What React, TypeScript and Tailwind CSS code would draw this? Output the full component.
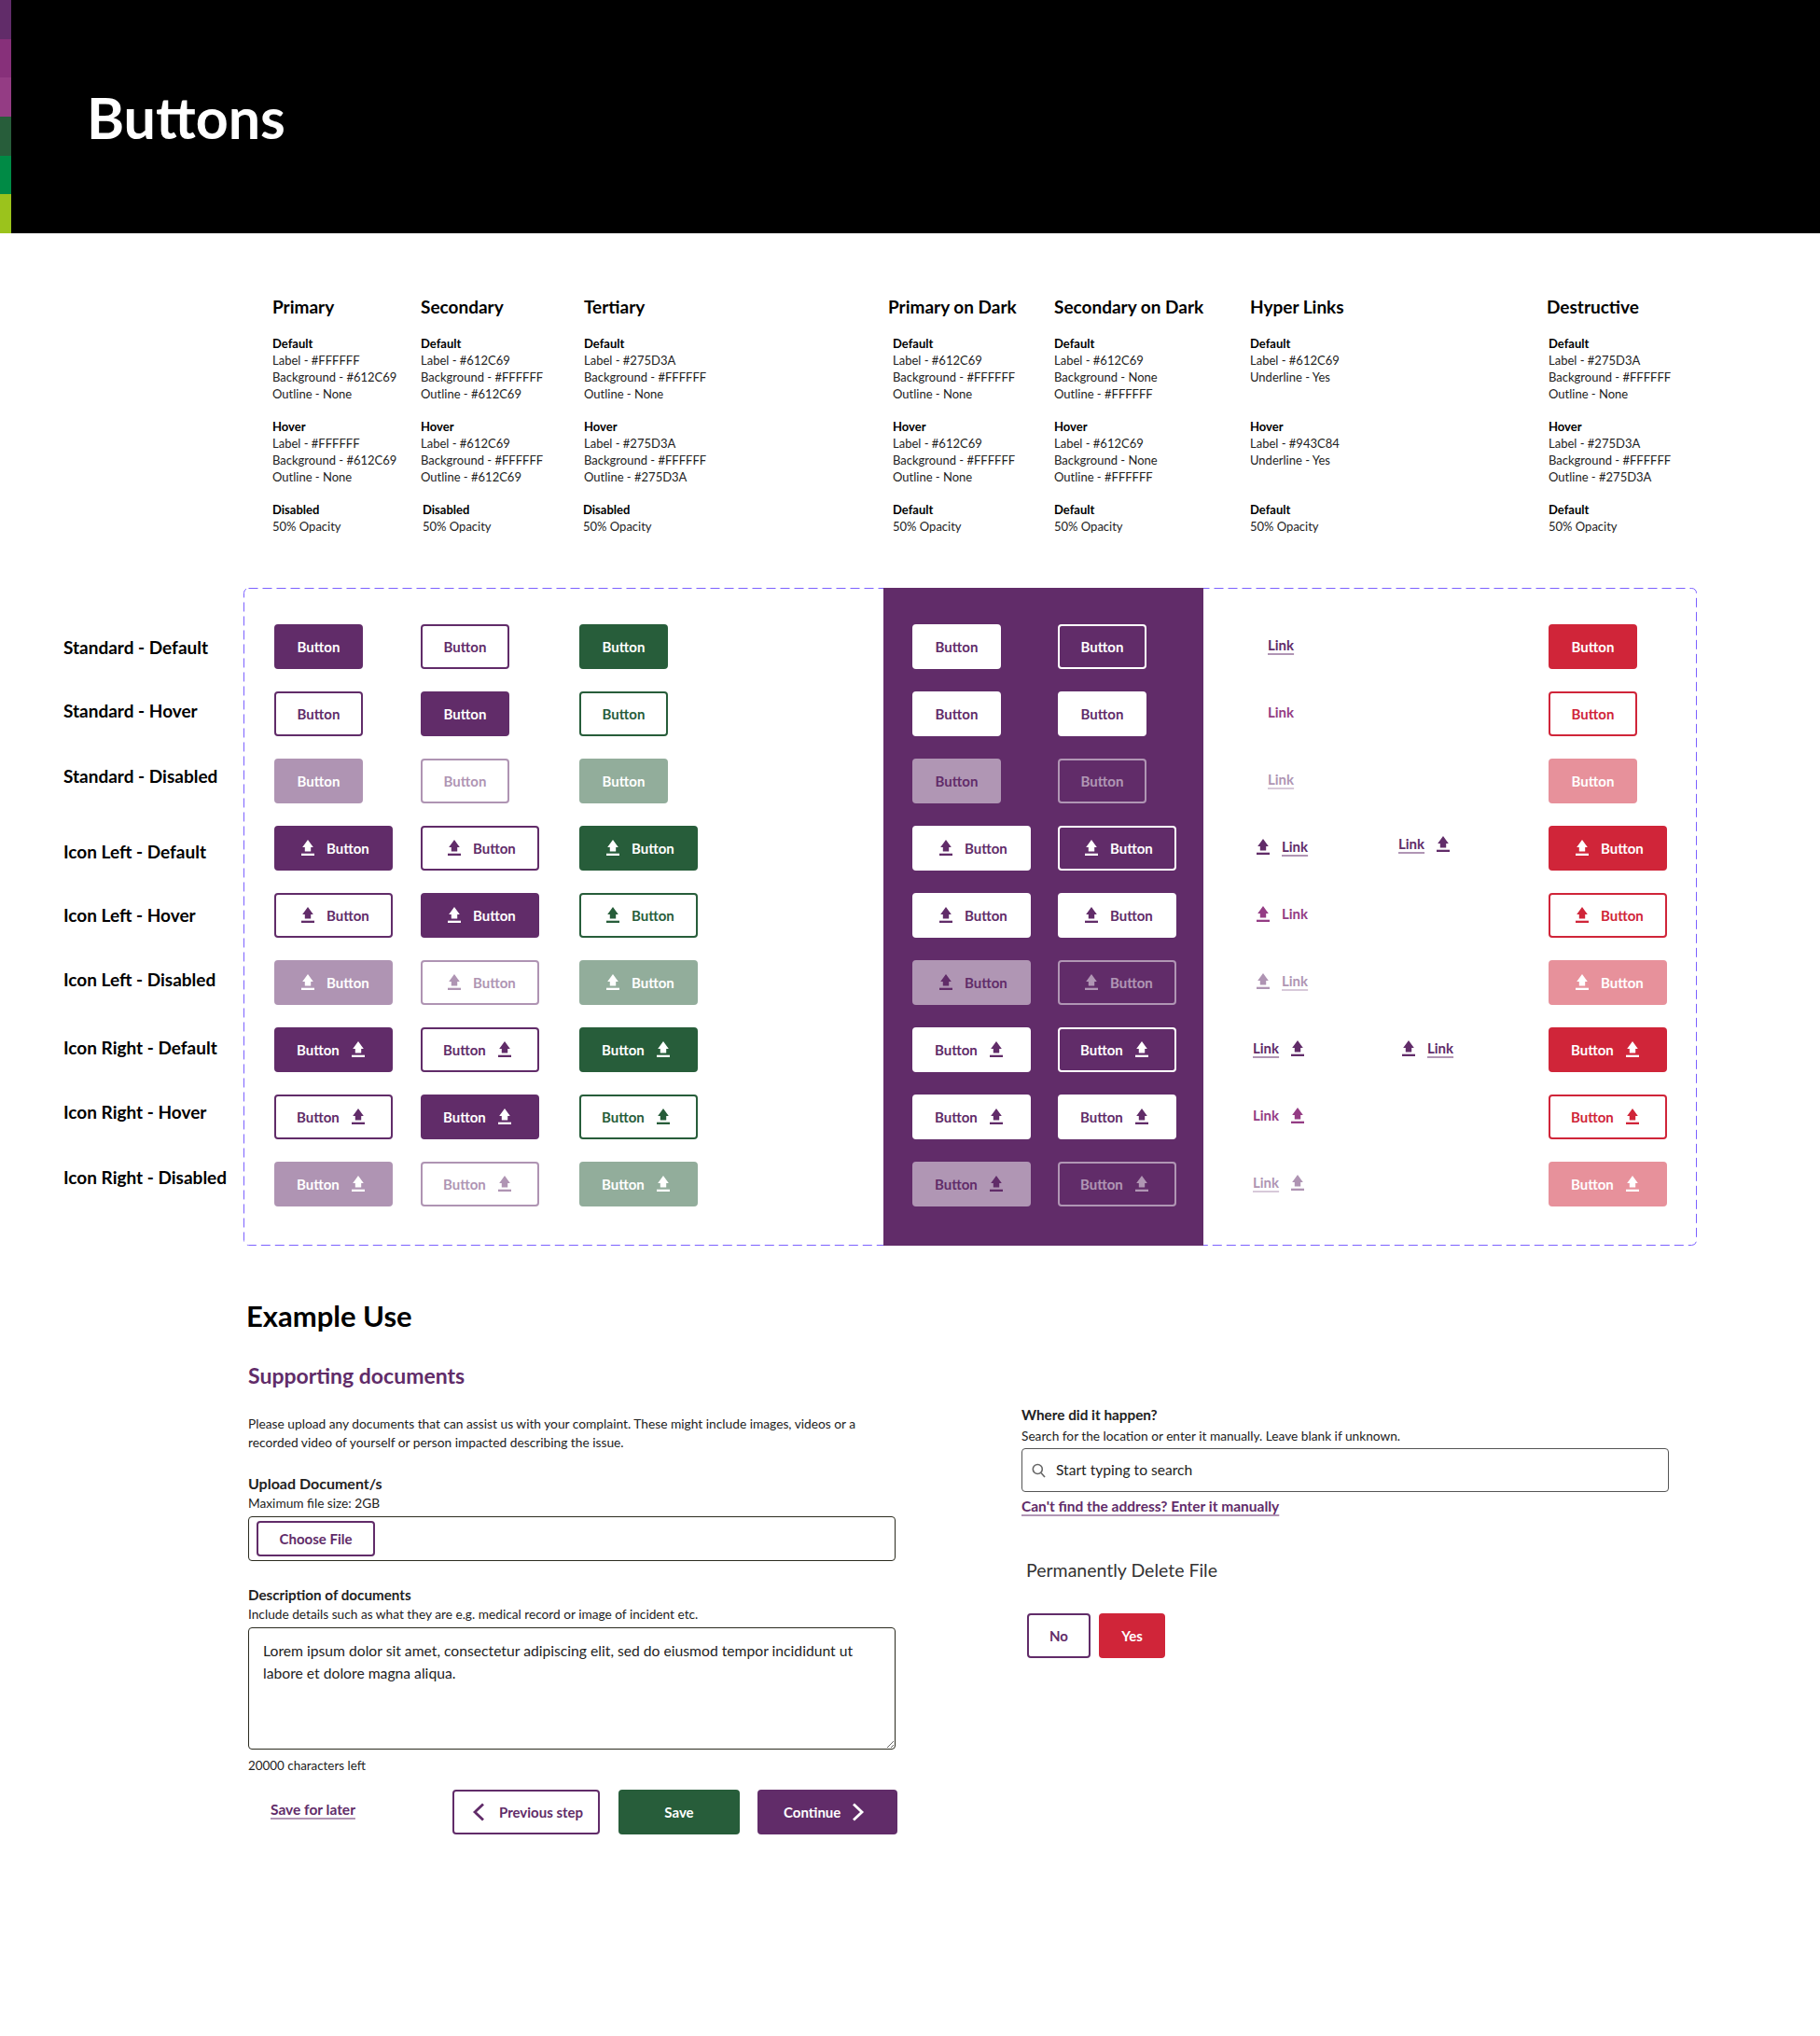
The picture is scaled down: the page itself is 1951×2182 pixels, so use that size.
import { ReactNode } from "react";

function UploadIcon({ className = "" }: { className?: string }) {
  return (
    <svg className={`w-[14px] h-[17px] shrink-0 -mt-[1px] ${className}`} viewBox="0 0 14 17" fill="currentColor">
      <path d="M7 0l5.8 8H10.2v4.6H3.8V8H1.2z" />
      <rect x="0" y="14.7" width="14" height="2.3" />
    </svg>
  );
}

type Kind = "plain" | "left" | "right";
type State = "default" | "hover" | "disabled";

const variants: Record<string, { default: string; hover: string }> = {
  primary: {
    default: "bg-[#612c69] border-[#612c69] text-white",
    hover: "bg-white border-[#612c69] text-[#612c69]",
  },
  secondary: {
    default: "bg-white border-[#612c69] text-[#612c69]",
    hover: "bg-[#612c69] border-[#612c69] text-white",
  },
  tertiary: {
    default: "bg-[#275d3a] border-[#275d3a] text-white",
    hover: "bg-white border-[#275d3a] text-[#275d3a]",
  },
  darkPrimary: {
    default: "bg-white border-white text-[#612c69]",
    hover: "bg-white border-white text-[#612c69]",
  },
  darkSecondary: {
    default: "bg-[#612c69] border-white text-white",
    hover: "bg-white border-white text-[#612c69]",
  },
  destructive: {
    default: "bg-[#d02539] border-[#d02539] text-white",
    hover: "bg-white border-[#d02539] text-[#d02539]",
  },
};

const rows: { kind: Kind; state: State }[] = [
  { kind: "plain", state: "default" },
  { kind: "plain", state: "hover" },
  { kind: "plain", state: "disabled" },
  { kind: "left", state: "default" },
  { kind: "left", state: "hover" },
  { kind: "left", state: "disabled" },
  { kind: "right", state: "default" },
  { kind: "right", state: "hover" },
  { kind: "right", state: "disabled" },
];

const kindLayout: Record<Kind, string> = {
  plain: "w-[95px] justify-center",
  left: "w-[127px] pl-[27px] gap-[13px]",
  right: "w-[127px] pl-[22px] gap-[13px]",
};

function Btn({ variant, kind, state }: { variant: string; kind: Kind; state: State }) {
  const v = variants[variant];
  const look = state === "hover" ? v.hover : v.default;
  const fade = state === "disabled" ? "opacity-50" : "";
  return (
    <div className={`${kindLayout[kind]} h-[48px] rounded-[4px] border-2 flex items-center text-[15px] font-bold ${look} ${fade}`}>
      {kind === "left" && <UploadIcon />}
      <span>Button</span>
      {kind === "right" && <UploadIcon />}
    </div>
  );
}

function BtnColumn({ variant, className = "" }: { variant: string; className?: string }) {
  return (
    <div className={`flex flex-col gap-6 ${className}`}>
      {rows.map((r, i) => (
        <Btn key={i} variant={variant} kind={r.kind} state={r.state} />
      ))}
    </div>
  );
}

function Lnk({ children = "Link", hover, className = "" }: { children?: ReactNode; hover?: boolean; className?: string }) {
  return (
    <span
      className={
        hover
          ? `text-[#943c84] ${className}`
          : `text-[#612c69] underline decoration-[#b095b4] decoration-2 underline-offset-[3px] ${className}`
      }
    >
      {children}
    </span>
  );
}

function LinkCell({ state, kind, className = "" }: { state: State; kind: Kind; className?: string }) {
  const hover = state === "hover";
  return (
    <div className={`h-[48px] pb-[3px] flex items-center gap-[13px] text-[15px] font-bold ${hover ? "text-[#943c84]" : "text-[#612c69]"} ${state === "disabled" ? "opacity-50" : ""} ${className}`}>
      {kind === "left" && <UploadIcon />}
      <Lnk hover={hover} />
      {kind === "right" && <UploadIcon />}
    </div>
  );
}

const labels: { text: string; cls: string }[] = [
  { text: "Standard - Default", cls: "" },
  { text: "Standard - Hover", cls: "mt-[42px]" },
  { text: "Standard - Disabled", cls: "mt-[44px]" },
  { text: "Icon Left - Default", cls: "mt-[55px]" },
  { text: "Icon Left - Hover", cls: "mt-[42px]" },
  { text: "Icon Left - Disabled", cls: "mt-[43px]" },
  { text: "Icon Right - Default", cls: "mt-[47px]" },
  { text: "Icon Right - Hover", cls: "mt-[43px]" },
  { text: "Icon Right - Disabled", cls: "mt-[44px]" },
];

type Spec = {
  title: string;
  width: string;
  body?: string;
  a: string[];
  b: string[];
  c: string;
  cIndent?: string;
};

const specs: Spec[] = [
  {
    title: "Primary",
    width: "w-[159px]",
    a: ["Label - #FFFFFF", "Background - #612C69", "Outline - None"],
    b: ["Label - #FFFFFF", "Background - #612C69", "Outline - None"],
    c: "Disabled",
  },
  {
    title: "Secondary",
    width: "w-[175px]",
    a: ["Label - #612C69", "Background - #FFFFFF", "Outline - #612C69"],
    b: ["Label - #612C69", "Background - #FFFFFF", "Outline - #612C69"],
    c: "Disabled",
    cIndent: "ml-[2px]",
  },
  {
    title: "Tertiary",
    width: "w-[326px]",
    a: ["Label - #275D3A", "Background - #FFFFFF", "Outline - None"],
    b: ["Label - #275D3A", "Background - #FFFFFF", "Outline - #275D3A"],
    c: "Disabled",
    cIndent: "-ml-[1px]",
  },
  {
    title: "Primary on Dark",
    width: "w-[178px]",
    body: "ml-[5px]",
    a: ["Label - #612C69", "Background - #FFFFFF", "Outline - None"],
    b: ["Label - #612C69", "Background - #FFFFFF", "Outline - None"],
    c: "Default",
  },
  {
    title: "Secondary on Dark",
    width: "w-[210px]",
    a: ["Label - #612C69", "Background - None", "Outline - #FFFFFF"],
    b: ["Label - #612C69", "Background - None", "Outline - #FFFFFF"],
    c: "Default",
  },
  {
    title: "Hyper Links",
    width: "w-[318px]",
    a: ["Label - #612C69", "Underline - Yes"],
    b: ["Label - #943C84", "Underline - Yes"],
    c: "Default",
  },
  {
    title: "Destructive",
    width: "w-[200px]",
    body: "ml-[2px]",
    a: ["Label - #275D3A", "Background - #FFFFFF", "Outline - None"],
    b: ["Label - #275D3A", "Background - #FFFFFF", "Outline - #275D3A"],
    c: "Default",
  },
];

function SpecColumn({ spec }: { spec: Spec }) {
  return (
    <div className={`${spec.width} shrink-0`}>
      <h3 className="text-[19px] leading-[26px] font-bold text-black">{spec.title}</h3>
      <div className={`mt-[17px] text-[13px] leading-[18px] text-[#222] ${spec.body ?? ""}`}>
        <div className="h-[89px]">
          <div className="font-bold text-black">Default</div>
          {spec.a.map((l) => (
            <div key={l}>{l}</div>
          ))}
        </div>
        <div className="h-[89px]">
          <div className="font-bold text-black">Hover</div>
          {spec.b.map((l) => (
            <div key={l}>{l}</div>
          ))}
        </div>
        <div className={spec.cIndent ?? ""}>
          <div className="font-bold text-black">{spec.c}</div>
          <div>50% Opacity</div>
        </div>
      </div>
    </div>
  );
}

function Chevron({ dir }: { dir: "left" | "right" }) {
  return (
    <svg className="w-[14px] h-[20px] shrink-0" viewBox="0 0 14 20" fill="none" stroke="currentColor" strokeWidth="2.8">
      <path d={dir === "left" ? "M12 1.5L3 10l9 8.5" : "M2 1.5L11 10l-9 8.5"} />
    </svg>
  );
}

export default function App() {
  return (
    <div className="min-h-[2182px] bg-white font-['Lato',sans-serif] text-black">
      {/* Header */}
      <header className="h-[250px] bg-black flex items-center">
        <div className="w-[12px] h-full flex flex-col shrink-0">
          <div className="flex-1 bg-[#612c69]" />
          <div className="flex-1 bg-[#87307a]" />
          <div className="flex-1 bg-[#943c84]" />
          <div className="flex-1 bg-[#275d3a]" />
          <div className="flex-1 bg-[#008a45]" />
          <div className="flex-1 bg-[#9bc31c]" />
        </div>
        <h1 className="ml-[81px] text-[61px] leading-none font-bold text-white">Buttons</h1>
      </header>

      {/* Specs */}
      <div className="pt-[66px] pl-[292px] flex">
        {specs.map((s) => (
          <SpecColumn key={s.title} spec={s} />
        ))}
      </div>

      {/* Matrix */}
      <div className="mt-[57px] flex">
        <div className="ml-[68px] w-[193px] shrink-0 pt-[51px] text-[19px] leading-[26px] font-bold">
          {labels.map((l) => (
            <div key={l.text} className={l.cls}>
              {l.text}
            </div>
          ))}
        </div>
        <div className="relative w-[1558px] flex">
          <svg className="absolute inset-0 w-[1558px] h-[705px]" viewBox="0 0 1558 705" fill="none">
            <rect x="0.5" y="0.5" width="1557" height="704" rx="5" stroke="#7b61ff" strokeDasharray="10 5" />
          </svg>
          <div className="relative flex pl-[33px] pt-[39px] pb-[42px] w-[686px] shrink-0">
            <BtnColumn variant="primary" className="w-[157px]" />
            <BtnColumn variant="secondary" className="w-[170px]" />
            <BtnColumn variant="tertiary" />
          </div>
          <div className="relative w-[343px] shrink-0 bg-[#612c69] flex pl-[31px] pt-[39px]">
            <BtnColumn variant="darkPrimary" className="w-[156px]" />
            <BtnColumn variant="darkSecondary" />
          </div>
          <div className="relative flex pl-[53px] pt-[39px] w-[370px] shrink-0">
            <div className="w-[156px] flex flex-col gap-6">
              {rows.map((r, i) => (
                <LinkCell key={i} state={r.state} kind={r.kind} className={r.kind === "plain" ? "pl-[16px]" : r.kind === "left" ? "pl-[4px]" : ""} />
              ))}
            </div>
            <div className="w-[161px] flex flex-col gap-6">
              <div className="h-[192px]" />
              <LinkCell state="default" kind="right" className="-mt-[3px]" />
              <div className="h-[123px]" />
              <LinkCell state="default" kind="left" className="pl-[4px]" />
            </div>
          </div>
          <div className="relative pt-[39px]">
            <BtnColumn variant="destructive" />
          </div>
        </div>
      </div>

      {/* Example use */}
      <h2 className="mt-[55px] ml-[264px] text-[31px] leading-[40px] font-bold">Example Use</h2>
      <div className="mt-[28px] ml-[266px] flex">
        <div className="w-[694px] shrink-0">
          <h3 className="text-[23px] leading-[32px] font-bold text-[#612c69]">Supporting documents</h3>
          <p className="mt-[26px] text-[13.75px] leading-[20px] text-[#222]">
            Please upload any documents that can assist us with your complaint. These might include images, videos or a
            <br />
            recorded video of yourself or person impacted describing the issue.
          </p>
          <div className="mt-[24px] text-[16px] leading-[20px] font-bold text-[#222]">Upload Document/s</div>
          <div className="mt-[2px] text-[13.7px] leading-[18px] text-[#222]">Maximum file size: 2GB</div>
          <div className="mt-[5px] h-[48px] border border-[#2b2b1f] rounded-[4px] flex items-center pl-[8px]">
            <div className="w-[127px] h-[38px] border-2 border-[#612c69] rounded-[4px] flex items-center justify-center text-[15px] font-bold text-[#612c69]">
              Choose File
            </div>
          </div>
          <div className="mt-[26px] text-[15.2px] leading-[20px] font-bold text-[#222]">Description of documents</div>
          <div className="mt-[2px] text-[13.7px] leading-[18px] text-[#222]">
            Include details such as what they are e.g. medical record or image of incident etc.
          </div>
          <textarea
            className="mt-[5px] block w-full h-[131px] border border-[#2b2b1f] rounded-[4px] px-[15px] py-[12px] text-[15.7px] leading-[24px] text-[#222] outline-none"
            defaultValue="Lorem ipsum dolor sit amet, consectetur adipiscing elit, sed do eiusmod tempor incididunt ut labore et dolore magna aliqua."
          />
          <div className="mt-[8px] text-[13.4px] leading-[18px] text-[#222]">20000 characters left</div>
          <div className="mt-[17px] flex items-center">
            <div className="ml-[24px] w-[195px] shrink-0 mb-[4px] text-[15.5px] font-bold">
              <Lnk>Save for later</Lnk>
            </div>
            <div className="w-[158px] shrink-0 h-[48px] border-2 border-[#612c69] rounded-[4px] flex items-center pl-[19px] gap-[15px] text-[15px] font-bold text-[#612c69]">
              <Chevron dir="left" />
              Previous step
            </div>
            <div className="ml-[20px] w-[130px] shrink-0 h-[48px] rounded-[4px] bg-[#275d3a] flex items-center justify-center text-[15px] font-bold text-white">
              Save
            </div>
            <div className="ml-[19px] w-[150px] shrink-0 h-[48px] rounded-[4px] bg-[#612c69] flex items-center pl-[28px] gap-[12px] text-[15px] font-bold text-white">
              Continue
              <Chevron dir="right" />
            </div>
          </div>
        </div>

        <div className="ml-[135px] mt-[47px] w-[694px] shrink-0">
          <div className="text-[15.3px] leading-[22px] font-bold text-[#222]">Where did it happen?</div>
          <div className="mt-[3px] text-[13.7px] leading-[18px] text-[#222]">
            Search for the location or enter it manually. Leave blank if unknown.
          </div>
          <div className="mt-[4px] h-[47px] border border-[#555] rounded-[4px] flex items-center pl-[10px] gap-[11px] text-[15.6px] text-[#222]">
            <svg className="w-[15px] h-[16px]" viewBox="0 0 15 16" fill="none" stroke="#666" strokeWidth="1.6">
              <circle cx="6.3" cy="6.5" r="5" />
              <path d="M10 10.5l4 4.6" />
            </svg>
            Start typing to search
          </div>
          <div className="mt-[5px] text-[15.5px] leading-[20px] font-bold">
            <Lnk>Can't find the address? Enter it manually</Lnk>
          </div>
          <div className="mt-[45px] ml-[5px] text-[19.5px] leading-[28px] text-[#333]">Permanently Delete File</div>
          <div className="mt-[32px] ml-[6px] flex gap-[9px] text-[15px] font-bold">
            <div className="w-[68px] h-[48px] border-2 border-[#612c69] rounded-[4px] flex items-center justify-center text-[#612c69]">
              No
            </div>
            <div className="w-[71px] h-[48px] bg-[#d02539] rounded-[4px] flex items-center justify-center text-white">
              Yes
            </div>
          </div>
        </div>
      </div>
    </div>
  );
}
